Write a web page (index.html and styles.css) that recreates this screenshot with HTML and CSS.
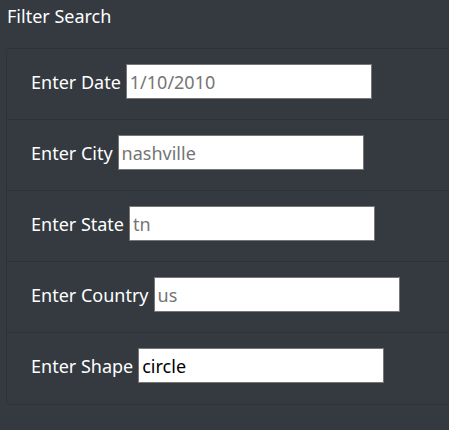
FILE: index.html
```html
<!DOCTYPE html>
<html>
<head>
<meta charset="utf-8">
<link rel="stylesheet" href="styles.css">
</head>
<body>
<div class="page">
  <h1 class="title">Filter Search</h1>
  <div class="card">
    <div class="row"><label>Enter Date</label><input type="text" placeholder="1/10/2010"></div>
    <div class="row"><label>Enter City</label><input type="text" placeholder="nashville"></div>
    <div class="row"><label>Enter State</label><input type="text" placeholder="tn"></div>
    <div class="row"><label>Enter Country</label><input type="text" placeholder="us"></div>
    <div class="row last"><label>Enter Shape</label><input type="text" value="circle"></div>
  </div>
</div>
</body>
</html>
```

FILE: styles.css
```css
html, body {
  margin: 0;
  padding: 0;
  background: #343a40;
  overflow: hidden;
}
body {
  font-family: "Noto Sans", "Open Sans", sans-serif;
  font-size: 18px;
  color: #fff;
}
.page {
  padding: 0 0 0 6px;
}
.title {
  margin: 0;
  padding: 2px 0 0 1px;
  font-size: 18px;
  font-weight: 400;
  line-height: 28px;
  height: 46px;
}
.card {
  width: 470px;
  border: 1px solid #2d3237;
  border-radius: 4px;
}
.row {
  display: flex;
  align-items: baseline;
  gap: 5px;
  padding: 15px 24px 20px;
  border-bottom: 1px solid #2d3237;
}
.row.last {
  border-bottom: none;
  padding-bottom: 21px;
}
label {
  white-space: nowrap;
}
input {
  box-sizing: border-box;
  width: 246px;
  height: 35px;
  border: 1px solid #767676;
  padding: 1px 3px 0;
  font-family: "Noto Sans", "Open Sans", sans-serif;
  font-size: 18px;
  color: #000;
  background: #fff;
  outline: none;
}
input::placeholder {
  color: #757575;
}
```
